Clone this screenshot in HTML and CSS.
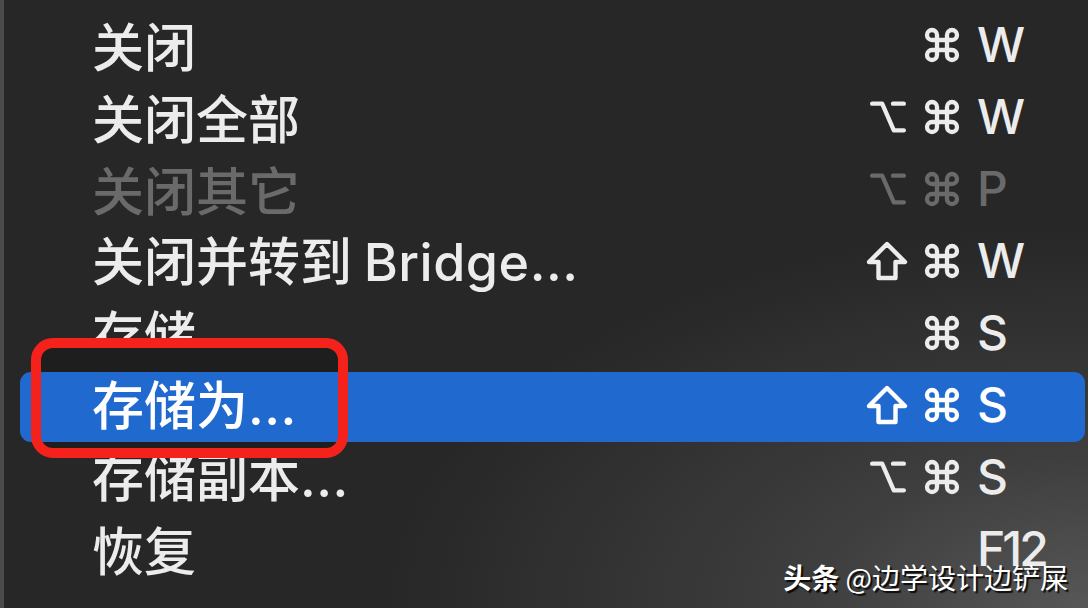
FILE: index.html
```html
<!DOCTYPE html>
<html lang="zh-CN">
<head>
<meta charset="utf-8">
<title>文件菜单</title>
<link rel="stylesheet" href="styles.css">
</head>
<body>
<div class="screen">
  <div class="edge"></div>
  <ul class="menu">
    <li class="item">
      <span class="label">关闭</span>
      <span class="mods">
        <svg class="ico" viewBox="0 0 24 24"><path d="M15 6v12a3 3 0 1 0 3-3H6a3 3 0 1 0 3 3V6a3 3 0 1 0-3 3h12a3 3 0 1 0-3-3"/></svg>
      </span>
      <span class="key">W</span>
    </li>
    <li class="item">
      <span class="label">关闭全部</span>
      <span class="mods">
        <svg class="ico" viewBox="0 0 24 24"><path d="M2.5 4h6l7 16h6"/><path d="M15 4h6.5"/></svg>
        <svg class="ico" viewBox="0 0 24 24"><path d="M15 6v12a3 3 0 1 0 3-3H6a3 3 0 1 0 3 3V6a3 3 0 1 0-3 3h12a3 3 0 1 0-3-3"/></svg>
      </span>
      <span class="key">W</span>
    </li>
    <li class="item disabled">
      <span class="label">关闭其它</span>
      <span class="mods">
        <svg class="ico" viewBox="0 0 24 24"><path d="M2.5 4h6l7 16h6"/><path d="M15 4h6.5"/></svg>
        <svg class="ico" viewBox="0 0 24 24"><path d="M15 6v12a3 3 0 1 0 3-3H6a3 3 0 1 0 3 3V6a3 3 0 1 0-3 3h12a3 3 0 1 0-3-3"/></svg>
      </span>
      <span class="key">P</span>
    </li>
    <li class="item">
      <span class="label">关闭并转到 <span class="latin">Bridge...</span></span>
      <span class="mods">
        <svg class="ico shift" viewBox="0 0 42 40"><path d="M21 3 39 21H29.5V37h-17V21H3Z"/></svg>
        <svg class="ico" viewBox="0 0 24 24"><path d="M15 6v12a3 3 0 1 0 3-3H6a3 3 0 1 0 3 3V6a3 3 0 1 0-3 3h12a3 3 0 1 0-3-3"/></svg>
      </span>
      <span class="key">W</span>
    </li>
    <li class="item">
      <span class="label">存储</span>
      <span class="mods">
        <svg class="ico" viewBox="0 0 24 24"><path d="M15 6v12a3 3 0 1 0 3-3H6a3 3 0 1 0 3 3V6a3 3 0 1 0-3 3h12a3 3 0 1 0-3-3"/></svg>
      </span>
      <span class="key">S</span>
    </li>
    <li class="item selected">
      <span class="label">存储为<span class="latin">...</span></span>
      <span class="mods">
        <svg class="ico shift" viewBox="0 0 42 40"><path d="M21 3 39 21H29.5V37h-17V21H3Z"/></svg>
        <svg class="ico" viewBox="0 0 24 24"><path d="M15 6v12a3 3 0 1 0 3-3H6a3 3 0 1 0 3 3V6a3 3 0 1 0-3 3h12a3 3 0 1 0-3-3"/></svg>
      </span>
      <span class="key">S</span>
    </li>
    <li class="item">
      <span class="label">存储副本<span class="latin">...</span></span>
      <span class="mods">
        <svg class="ico" viewBox="0 0 24 24"><path d="M2.5 4h6l7 16h6"/><path d="M15 4h6.5"/></svg>
        <svg class="ico" viewBox="0 0 24 24"><path d="M15 6v12a3 3 0 1 0 3-3H6a3 3 0 1 0 3 3V6a3 3 0 1 0-3 3h12a3 3 0 1 0-3-3"/></svg>
      </span>
      <span class="key">S</span>
    </li>
    <li class="item">
      <span class="label">恢复</span>
      <span class="mods"></span>
      <span class="key f12">F12</span>
    </li>
  </ul>
  <div class="annotation"></div>
  <div class="watermark"><b>头条</b> @边学设计边铲屎</div>
</div>
</body>
</html>
```

FILE: styles.css
```css
* {
  box-sizing: border-box;
}

html, body {
  margin: 0;
  padding: 0;
}

body {
  width: 1088px;
  height: 608px;
  overflow: hidden;
  background: #272727;
}

.screen {
  position: relative;
  width: 1088px;
  height: 608px;
  display: flex;
  background:
    radial-gradient(ellipse 700px 380px at 100% 100%, #575757 0%, #3e3e3e 40%, rgba(39,39,39,0) 100%),
    #272727;
  font-family: "Inter", "Noto Sans CJK SC", sans-serif;
  color: #ececec;
}

.edge {
  width: 4px;
  flex: none;
  background: #4b4b4b;
}

.menu {
  position: relative;
  z-index: 0;
  list-style: none;
  margin: 0;
  padding: 9px 0 0 0;
  flex: 1;
  display: flex;
  flex-direction: column;
}

.item {
  position: relative;
  height: 72px;
  display: grid;
  grid-template-columns: 1fr auto 112px;
  column-gap: 14px;
  align-items: center;
  padding-left: 88px;
}

.label {
  font-size: 52px;
  font-weight: 500;
  line-height: 1;
  white-space: nowrap;
  font-family: "Noto Sans CJK SC", sans-serif;
}

.label .latin {
  font-family: "Inter", "Noto Sans CJK SC", sans-serif;
  font-size: 52px;
  font-weight: 500;
  letter-spacing: 0.5px;
}

.mods {
  display: flex;
  align-items: center;
  justify-content: flex-end;
  gap: 14px;
}

.ico {
  width: 40px;
  height: 40px;
  fill: none;
  stroke: currentColor;
  stroke-width: 2.6;
  stroke-linecap: round;
  stroke-linejoin: round;
}

.ico.shift {
  width: 42px;
  height: 40px;
  stroke-width: 4.4;
  stroke-linecap: butt;
}

.key {
  font-size: 48px;
  font-weight: 500;
  line-height: 1;
  font-family: "Inter", sans-serif;
  padding-left: 1px;
}

.key.f12 {
  letter-spacing: -3px;
}

.disabled {
  color: #6a6a6a;
}

.selected {
  color: #ffffff;
}

.selected::before {
  content: "";
  position: absolute;
  left: 16px;
  right: 3px;
  top: 3px;
  bottom: -1px;
  border-radius: 11px;
  background: #1f69cf;
  z-index: -1;
}

.annotation {
  position: absolute;
  left: 31px;
  top: 338px;
  width: 317px;
  height: 120px;
  border: 10px solid #f5221b;
  border-radius: 22px;
  background: linear-gradient(to bottom, #1e1e1e 0, #1e1e1e 24px, transparent 24px, transparent 94px, #1e1e1e 94px);
  z-index: 2;
}

.watermark {
  position: absolute;
  right: 20px;
  bottom: 17px;
  font-family: "Noto Sans CJK SC", sans-serif;
  font-size: 28px;
  line-height: 1;
  color: #ffffff;
  text-shadow: 2px 2px 1px rgba(0,0,0,0.85);
  z-index: 3;
  white-space: nowrap;
}

.watermark b {
  font-weight: 700;
}
```
